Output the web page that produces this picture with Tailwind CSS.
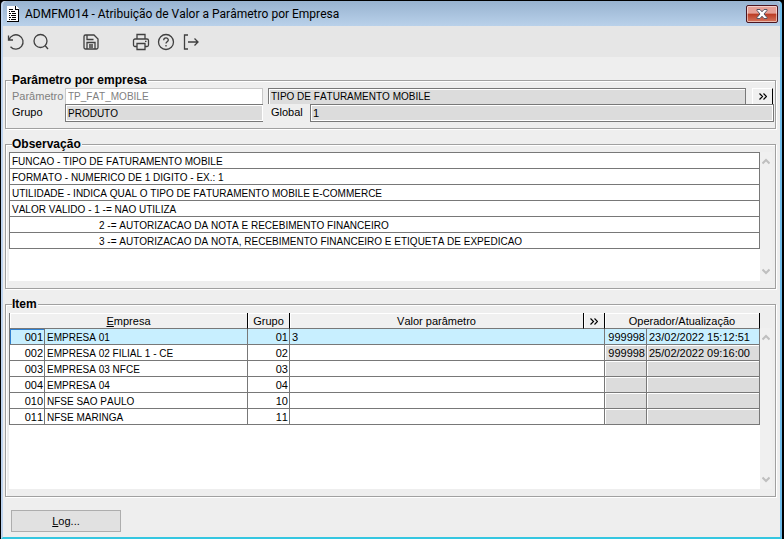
<!DOCTYPE html>
<html lang="pt-BR">

<head>
    <meta charset="UTF-8">
    <meta name="viewport" content="width=device-width, initial-scale=1.0">
    <title>ADMFM014 - Atribuição de Valor a Parâmetro por Empresa</title>
    <script src="https://cdn.jsdelivr.net/npm/@tailwindcss/browser@4"></script>
</head>

<body class="bg-black font-['Liberation_Sans',Arial,sans-serif] text-[11px] leading-[15px] text-black [font-kerning:none]">

    <div class="min-h-screen flex flex-col pl-px pr-[2px] pt-px">
        <div class="flex-1 flex flex-col rounded-t border-l-2 border-r-2 border-b-2 border-l-[#bdd3ee] border-r-[#6fbbe8] border-b-[#34c6e0] bg-[#eeeeee]">

            <!-- Title bar -->
            <header class="flex items-center h-[25px] pl-1 pr-[2px] rounded-t bg-linear-to-b from-[#98b3d0] to-[#b9d1ea]">
                <svg class="w-3 h-4" viewBox="0 0 12 16" shape-rendering="crispEdges">
                    <path d="M0 0h9l3 3v13H0z" fill="#fff" />
                    <path d="M9 0v3h3v13H0v-1h11V4H8V0z" fill="#000" />
                    <path d="M2 3h4M4 5h4M2 7h2M5 7h4M4 9h5M2 11h2M5 11h4M4 13h5M2 5h1M2 9h1M2 13h1" transform="translate(0 .5)" stroke="#000" />
                </svg>
                <h1 class="flex-1 ml-[6px] pt-px font-[Roboto,'Open_Sans',sans-serif] text-xs whitespace-nowrap">ADMFM014 - Atribuição de Valor a Parâmetro por Empresa</h1>
                <button aria-label="Fechar" class="flex items-center justify-center w-8 h-[18px] rounded-[2px] border border-[#4b1520] bg-linear-to-b from-[#e6a096] from-45% via-[#bb3a22] via-50% to-[#d4745c] shadow-[inset_0_0_0_1px_#ffffff80]">
                    <svg class="w-3 h-[10px]" viewBox="0 0 12 10">
                        <path d="M1 .5h3l2 2.3 2-2.3h3v1L8 5l3 3.500v1H8L6 7.200 4 9.500H1v-1L4 5 1 1.500z" fill="#fff" stroke="#535666" />
                    </svg>
                </button>
            </header>

            <!-- Toolbar -->
            <nav class="flex items-center h-[31px] pt-px bg-[#e6e6e6] text-[#404040]">
                <button aria-label="Desfazer" class="flex justify-center w-[25px]">
                    <svg class="w-[18px] h-[18px]" viewBox="0 0 18 18" fill="none" stroke="currentColor" stroke-width="1.3">
                        <path d="M1.500 2.500v4.500H6M2 6.800A7.200 7.200 0 1 1 3.500 13.800" />
                    </svg>
                </button>
                <button aria-label="Pesquisar" class="flex justify-center w-[25px]">
                    <svg class="w-[18px] h-[18px]" viewBox="0 0 18 18" fill="none" stroke="currentColor" stroke-width="1.3">
                        <circle cx="8.500" cy="8" r="6.500" />
                        <path d="M13 12.500l3 3.500" />
                    </svg>
                </button>
                <button aria-label="Salvar" class="flex justify-center w-[25px] ml-[25px]">
                    <svg class="w-[18px] h-[18px]" viewBox="0 0 18 18" fill="none" stroke="currentColor" stroke-width="1.3">
                        <path d="M3.500 2h8.500l4 4v8.500a1.500 1.500 0 0 1-1.500 1.500h-11A1.500 1.500 0 0 1 2 14.500v-11A1.500 1.500 0 0 1 3.500 2zM5 2v4.500h6.500M5 16v-6.500h8V16M7 12h4M7 14h4" />
                    </svg>
                </button>
                <button aria-label="Imprimir" class="flex justify-center w-[25px] ml-[25px]">
                    <svg class="w-[18px] h-[18px]" viewBox="0 0 18 18" fill="none" stroke="currentColor" stroke-width="1.3">
                        <path d="M5 6V1.500h8V6M5 13.500H3A1.500 1.500 0 0 1 1.500 12V7.500A1.500 1.500 0 0 1 3 6h12a1.500 1.500 0 0 1 1.500 1.500V12a1.500 1.500 0 0 1-1.500 1.500h-2M5 10.500h8v6H5zM13 8.300h1.500" />
                    </svg>
                </button>
                <button aria-label="Ajuda" class="flex justify-center w-[25px]">
                    <svg class="w-[18px] h-[18px]" viewBox="0 0 18 18" fill="none" stroke="currentColor" stroke-width="1.3">
                        <circle cx="9" cy="9" r="7.500" />
                        <path d="M6.700 7.200c0-3 4.600-3 4.600-.2 0 1.800-2.300 1.800-2.300 3.500M9 12v1.500" />
                    </svg>
                </button>
                <button aria-label="Sair" class="flex justify-center w-[25px]">
                    <svg class="w-[18px] h-[18px]" viewBox="0 0 18 18" fill="none" stroke="currentColor" stroke-width="1.3">
                        <path d="M6 2H2.500v14H6M6 9h10M12.500 5.500L16 9l-3.500 3.500" />
                    </svg>
                </button>
            </nav>

            <main class="flex-1 flex flex-col gap-[7px] pt-[15px] pl-[2px] pr-1">

                <fieldset class="border border-[#a0a0a0] shadow-[1px_1px_0_#fff,inset_1px_1px_0_#fff] pl-[6px] pr-px pb-[6px]">
                    <legend class="h-4 leading-4 pr-px bg-[#eeeeee] text-xs leading-4 font-bold">Parâmetro por empresa</legend>
                    <div class="flex h-4">
                        <label for="parametro" class="w-[53px] pt-px text-[#808080]">Parâmetro</label>
                        <input id="parametro" disabled value="TP_FAT_MOBILE" class="w-[198px] pl-[2px] bg-white border-t border-l border-r border-[#c8c8c8] text-[10px] text-[#808080]">
                        <input aria-label="Descrição" readonly value="TIPO DE FATURAMENTO MOBILE" class="flex-1 min-w-0 ml-[5px] pl-[2px] bg-[#dcdcdc] border-t border-l border-r border-[#787878] shadow-[inset_1px_1px_0_#fff] text-[10px]">
                        <button aria-label="Abrir parâmetro" class="flex items-center justify-center w-[21px] ml-[6px] mr-px bg-[#f0f0f0] border-t border-l border-t-white border-l-white border-r border-r-black">
                            <svg class="w-2 h-[7px]" viewBox="0 0 8 7" fill="none" stroke="#000" stroke-width="1.2">
                                <path d="M.5.5l3 3-3 3M4.500.5l3 3-3 3" />
                            </svg>
                        </button>
                    </div>
                    <div class="flex h-[18px]">
                        <label for="grupo" class="w-[53px] pt-px">Grupo</label>
                        <input id="grupo" readonly value="PRODUTO" class="w-[198px] pl-[2px] bg-[#dcdcdc] border-t border-l border-b border-[#787878] shadow-[inset_1px_1px_0_#fff,inset_-1px_-1px_0_#fff] text-[10px]">
                        <label for="global" class="w-[47px] pl-2 pt-px">Global</label>
                        <input id="global" readonly value="1" class="flex-1 min-w-0 pl-[2px] bg-[#dcdcdc] border border-[#787878] shadow-[inset_1px_1px_0_#fff,inset_-1px_-1px_0_#fff]">
                    </div>
                </fieldset>

                <fieldset class="border border-[#a0a0a0] shadow-[1px_1px_0_#fff,inset_1px_1px_0_#fff] pl-[3px] pr-[3px] pb-[7px]">
                    <legend class="h-4 ml-[3px] pr-px bg-[#eeeeee] text-xs leading-4 font-bold">Observação</legend>
                    <div class="flex min-h-[129px]">
                        <div class="flex-1 bg-white">
                            <table class="w-full border-separate border-spacing-0 border border-b-0 border-[#787878] text-[10px] leading-[13px] whitespace-nowrap [&_td]:h-4 [&_td]:p-0 [&_td]:pl-[2px] [&_td]:pt-[2px] [&_td]:border-b [&_td]:border-[#787878]">
                                <tbody>
                                    <tr><td>FUNCAO - TIPO DE FATURAMENTO MOBILE</td></tr>
                                    <tr><td>FORMATO - NUMERICO DE 1 DIGITO - EX.: 1</td></tr>
                                    <tr><td>UTILIDADE - INDICA QUAL O TIPO DE FATURAMENTO MOBILE E-COMMERCE</td></tr>
                                    <tr><td>VALOR VALIDO - 1 -= NAO UTILIZA</td></tr>
                                    <tr><td><span class="ml-[87px]">2 -= AUTORIZACAO DA NOTA E RECEBIMENTO FINANCEIRO</span></td></tr>
                                    <tr><td><span class="ml-[87px]">3 -= AUTORIZACAO DA NOTA, RECEBIMENTO FINANCEIRO E ETIQUETA DE EXPEDICAO</span></td></tr>
                                </tbody>
                            </table>
                        </div>
                        <div class="flex flex-col justify-between w-3 py-[6px] bg-[#f0f0f0]">
                            <button aria-label="Rolar observação para cima" class="pl-[2px]">
                                <svg class="w-2 h-[7px]" viewBox="0 0 8 7" fill="none" stroke="#bfbfbf" stroke-width="2"><path d="M.5 5.500L4 2l3.500 3.500" /></svg>
                            </button>
                            <button aria-label="Rolar observação para baixo" class="pl-[2px]">
                                <svg class="w-2 h-[7px]" viewBox="0 0 8 7" fill="none" stroke="#bfbfbf" stroke-width="2"><path d="M.5 1.500L4 5l3.500-3.500" /></svg>
                            </button>
                        </div>
                    </div>
                </fieldset>

                <fieldset class="border border-[#a0a0a0] shadow-[1px_1px_0_#fff,inset_1px_1px_0_#fff] pl-[3px] pr-[3px] pb-[7px]">
                    <legend class="h-4 ml-[3px] pr-px bg-[#eeeeee] text-xs leading-4 font-bold">Item</legend>
                    <div class="flex min-h-[177px]">
                        <div class="flex-1 bg-linear-to-b from-[#eeeeee] from-[17px] to-white to-[17px]">
                            <table class="w-full mt-px table-fixed border-separate border-spacing-0 border-l border-[#787878] leading-[13px] whitespace-nowrap [&_th]:h-4 [&_th]:p-0 [&_th]:pt-[2px] [&_th]:font-normal [&_th]:bg-[#f0f0f0] [&_th]:border-r [&_th]:border-r-black [&_th]:border-b [&_th]:border-b-[#787878] [&_th]:shadow-[inset_1px_1px_0_#fff] [&_td]:h-4 [&_td]:p-0 [&_td]:pl-[2px] [&_td]:pr-px [&_td]:pt-[2px] [&_td]:border-r [&_td]:border-b [&_td]:border-[#787878]">
                                <colgroup>
                                    <col class="w-[35px]">
                                    <col class="w-[203px]">
                                    <col class="w-[42px]">
                                    <col>
                                    <col class="w-[21px]">
                                    <col class="w-[42px]">
                                    <col class="w-[113px]">
                                </colgroup>
                                <thead>
                                    <tr>
                                        <th colspan="2"><u>E</u>mpresa</th>
                                        <th>Grupo</th>
                                        <th>Valor parâmetro</th>
                                        <th>
                                            <button aria-label="Abrir valor" class="flex items-center justify-center w-full">
                                                <svg class="w-2 h-[7px]" viewBox="0 0 8 7" fill="none" stroke="#000" stroke-width="1.2">
                                                    <path d="M.5.5l3 3-3 3M4.500.5l3 3-3 3" />
                                                </svg>
                                            </button>
                                        </th>
                                        <th colspan="2">Operador/Atualização</th>
                                    </tr>
                                </thead>
                                <tbody>
                                    <tr class="bg-[#c8efff]">
                                        <td class="shadow-[inset_1px_1px_0_#2f7fd0]"><input aria-label="Empresa" value="001" class="block w-full h-[13px] text-right"></td>
                                        <td class="text-[10px]">EMPRESA 01</td>
                                        <td class="text-right">01</td>
                                        <td colspan="2"><input aria-label="Valor parâmetro 001" value="3" class="block w-full h-[13px]"></td>
                                        <td class="text-right">999998</td>
                                        <td>23/02/2022 15:12:51</td>
                                    </tr>
                                    <tr>
                                        <td class="text-right">002</td>
                                        <td class="text-[10px]">EMPRESA 02 FILIAL 1 - CE</td>
                                        <td class="text-right">02</td>
                                        <td colspan="2"></td>
                                        <td class="text-right bg-[#dcdcdc] shadow-[inset_1px_1px_0_#fff]">999998</td>
                                        <td class="bg-[#dcdcdc] shadow-[inset_1px_1px_0_#fff]">25/02/2022 09:16:00</td>
                                    </tr>
                                    <tr>
                                        <td class="text-right">003</td>
                                        <td class="text-[10px]">EMPRESA 03 NFCE</td>
                                        <td class="text-right">03</td>
                                        <td colspan="2"></td>
                                        <td class="bg-[#dcdcdc] shadow-[inset_1px_1px_0_#fff]"></td>
                                        <td class="bg-[#dcdcdc] shadow-[inset_1px_1px_0_#fff]"></td>
                                    </tr>
                                    <tr>
                                        <td class="text-right">004</td>
                                        <td class="text-[10px]">EMPRESA 04</td>
                                        <td class="text-right">04</td>
                                        <td colspan="2"></td>
                                        <td class="bg-[#dcdcdc] shadow-[inset_1px_1px_0_#fff]"></td>
                                        <td class="bg-[#dcdcdc] shadow-[inset_1px_1px_0_#fff]"></td>
                                    </tr>
                                    <tr>
                                        <td class="text-right">010</td>
                                        <td class="text-[10px]">NFSE SAO PAULO</td>
                                        <td class="text-right">10</td>
                                        <td colspan="2"></td>
                                        <td class="bg-[#dcdcdc] shadow-[inset_1px_1px_0_#fff]"></td>
                                        <td class="bg-[#dcdcdc] shadow-[inset_1px_1px_0_#fff]"></td>
                                    </tr>
                                    <tr>
                                        <td class="text-right">011</td>
                                        <td class="text-[10px]">NFSE MARINGA</td>
                                        <td class="text-right">11</td>
                                        <td colspan="2"></td>
                                        <td class="bg-[#dcdcdc] shadow-[inset_1px_1px_0_#fff]"></td>
                                        <td class="bg-[#dcdcdc] shadow-[inset_1px_1px_0_#fff]"></td>
                                    </tr>
                                </tbody>
                            </table>
                        </div>
                        <div class="flex flex-col justify-between w-3 mt-4 py-[6px] bg-[#f0f0f0]">
                            <button aria-label="Rolar itens para cima" class="pl-[2px]">
                                <svg class="w-2 h-[7px]" viewBox="0 0 8 7" fill="none" stroke="#bfbfbf" stroke-width="2"><path d="M.5 5.500L4 2l3.500 3.500" /></svg>
                            </button>
                            <button aria-label="Rolar itens para baixo" class="pl-[2px]">
                                <svg class="w-2 h-[7px]" viewBox="0 0 8 7" fill="none" stroke="#bfbfbf" stroke-width="2"><path d="M.5 1.500L4 5l3.500-3.500" /></svg>
                            </button>
                        </div>
                    </div>
                </fieldset>

                <div class="pt-[6px] pl-[6px]">
                    <button class="block w-[110px] h-[22px] border border-[#adadad] bg-[#e1e1e1]"><u>L</u>og...</button>
                </div>
            </main>
        </div>
    </div>

</body>

</html>
